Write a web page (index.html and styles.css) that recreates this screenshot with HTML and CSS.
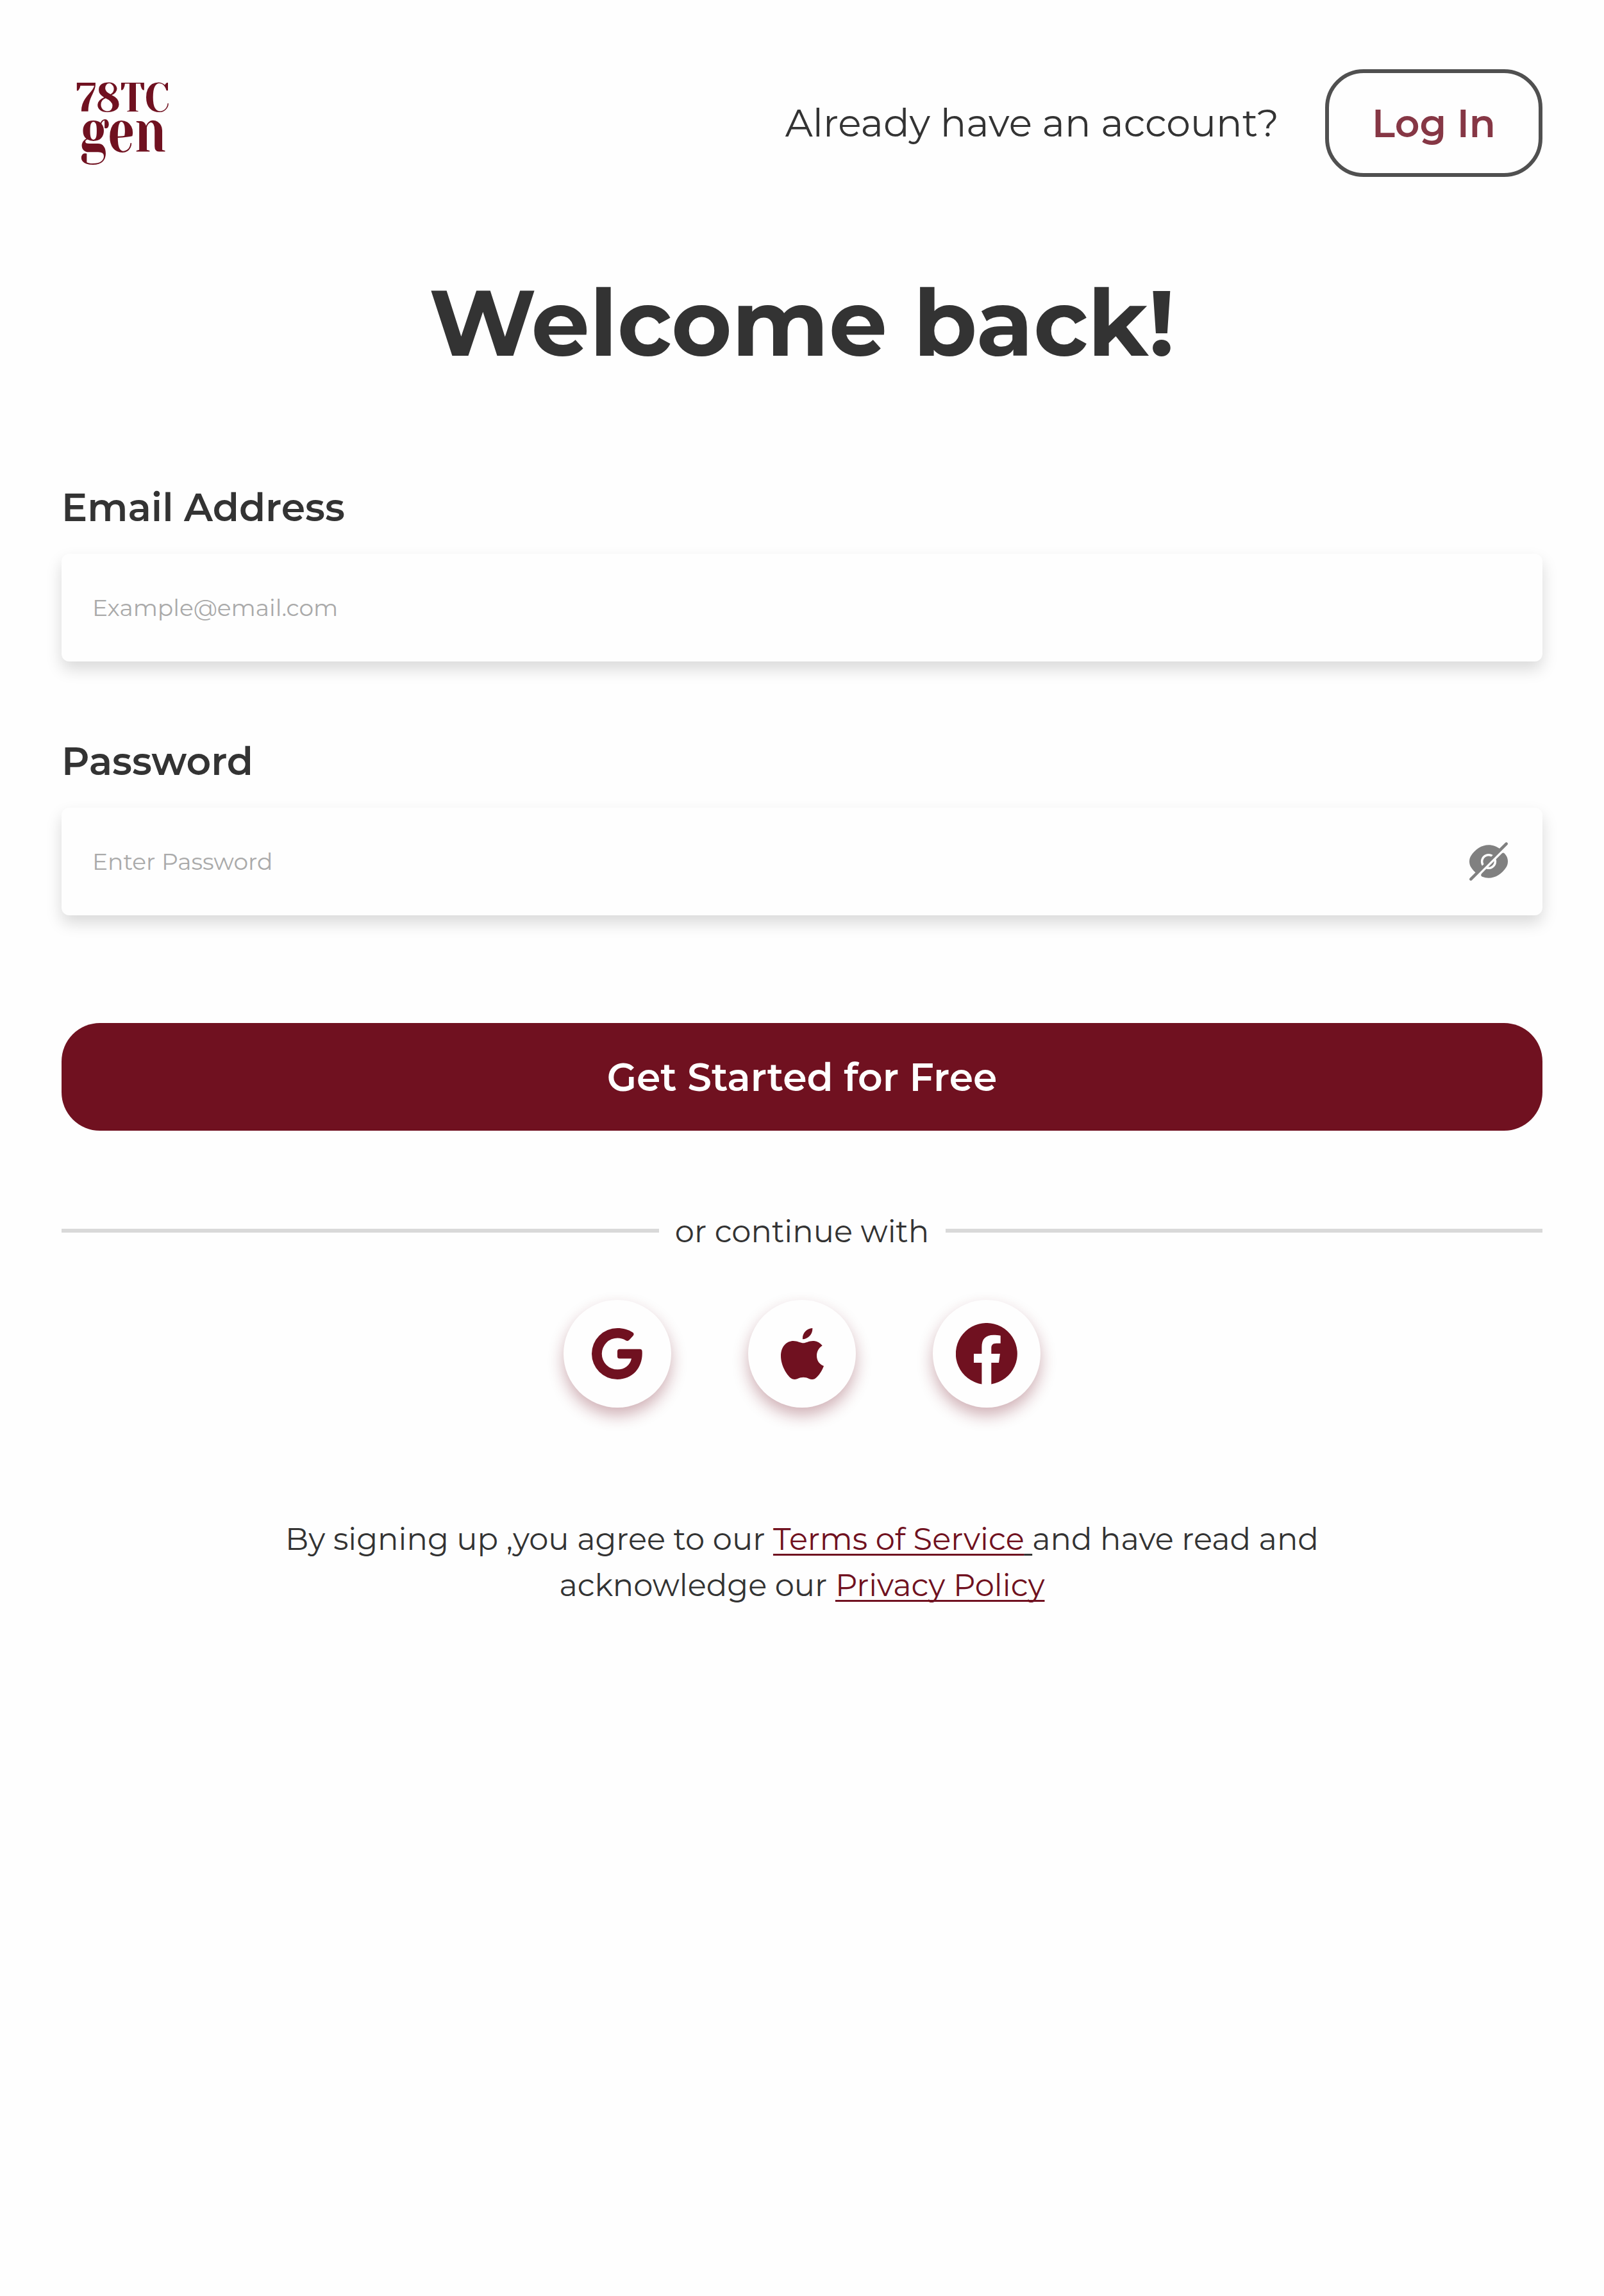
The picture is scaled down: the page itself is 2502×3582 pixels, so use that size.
FILE: index.html
```html
<!DOCTYPE html>
<html lang="en">
<head>
<meta charset="utf-8">
<title>78TC gen</title>
<link rel="stylesheet" href="styles.css">
</head>
<body>
<div class="page">
  <header class="header">
    <svg class="logo" viewBox="0 0 192 168" role="img" aria-label="78TC gen">
      <text x="22" y="66" font-size="64" textLength="147" lengthAdjust="spacingAndGlyphs">78TC</text>
      <text x="29" y="129" font-size="94" textLength="134" lengthAdjust="spacingAndGlyphs">gen</text>
    </svg>
    <div class="account">
      <span class="account-text">Already have an account?</span>
      <button class="login" type="button">Log In</button>
    </div>
  </header>

  <h1 class="title">Welcome back!</h1>

  <form class="form">
    <div class="field">
      <label class="label" for="email">Email Address</label>
      <div class="box">
        <input class="input" id="email" type="text" placeholder="Example@email.com">
      </div>
    </div>
    <div class="field">
      <label class="label" for="password">Password</label>
      <div class="box">
        <input class="input" id="password" type="text" placeholder="Enter Password">
        <svg class="eye" viewBox="0 0 24 24">
          <path d="M21.27 9.18C20.98 8.72 20.67 8.29 20.35 7.89C19.98 7.42 19.28 7.38 18.86 7.8L15.86 10.8C16.08 11.46 16.12 12.22 15.92 13.01C15.57 14.42 14.43 15.56 13.02 15.91C12.23 16.11 11.47 16.07 10.81 15.85C10.81 15.85 9.38 17.28 8.35 18.31C7.85 18.81 8.01 19.69 8.68 19.95C9.75 20.36 10.86 20.57 12 20.57C13.78 20.57 15.51 20.05 17.09 19.08C18.7 18.08 20.15 16.61 21.32 14.74C22.27 13.23 22.22 10.69 21.27 9.18Z"/>
          <path d="M14.02 9.98L9.98 14.02C9.47 13.5 9.14 12.78 9.14 12C9.14 10.43 10.42 9.14 12 9.14C12.78 9.14 13.5 9.47 14.02 9.98Z"/>
          <path d="M18.25 5.75L14.86 9.14C14.13 8.4 13.12 7.96 12 7.96C9.76 7.96 7.96 9.77 7.96 12C7.96 13.12 8.41 14.13 9.14 14.86L5.76 18.25H5.75C4.64 17.35 3.62 16.2 2.75 14.84C1.75 13.27 1.75 10.72 2.75 9.15C3.91 7.33 5.33 5.9 6.91 4.92C8.49 3.96 10.22 3.43 12 3.43C14.23 3.43 16.39 4.25 18.25 5.75Z"/>
          <path d="M14.86 12C14.86 13.57 13.58 14.86 12 14.86C11.94 14.86 11.89 14.86 11.83 14.84L14.84 11.83C14.86 11.89 14.86 11.94 14.86 12Z"/>
          <path d="M21.77 2.23C21.47 1.93 20.98 1.93 20.68 2.23L2.23 20.69C1.93 20.99 1.93 21.48 2.23 21.78C2.38 21.92 2.57 22 2.77 22C2.97 22 3.16 21.92 3.31 21.77L21.77 3.31C22.08 3.01 22.08 2.53 21.77 2.23Z"/>
        </svg>
      </div>
    </div>
    <button class="submit" type="button">Get Started for Free</button>
  </form>

  <div class="divider">
    <span class="rule"></span>
    <span class="divider-text">or continue with</span>
    <span class="rule"></span>
  </div>

  <div class="socials">
    <a class="social" aria-label="Google">
      <svg width="80" height="80" viewBox="0 0 80 80"><path d="M64 6.8C66 8.2 66 10.5 64.5 12L58.5 18.6C57 20.3 55 20.3 53.2 19.2C49.3 16.8 45 15.5 40.3 15.5A24.55 24.55 0 1 0 40.3 64.6C51 64.6 60 58 62 47.5H43.5Q40 47.5 40 44V36.2Q40 32.7 43.5 32.7H75.3Q78.2 32.7 78.6 35.6C80.5 60 65 80 40 80A40 40 0 0 1 0 40A40 40 0 0 1 40 0C49 0 57.5 2.3 64 6.8Z"/></svg>
    </a>
    <a class="social" aria-label="Apple">
      <svg width="67" height="80" viewBox="0 0 67 80"><path d="M35 23.3C31 23.3 26 20 19.5 20C9 20 0 28.5 0 43.5C0 58 9 73 16 78.3C18.5 80.3 22.5 80.4 26 79C32 76 38.5 76 44 79C48 80.6 51.5 80.3 54 78.3C59 74.3 64 67.5 67 59C60 56.5 56 50.5 56 43C56 36.5 59.3 30.8 64.7 27.3C61 22.8 55.5 20 50 20C43.5 20 39 23.3 35 23.3ZM34 17.3C33.2 8.5 40 .3 49.3 0C50 9 43 17 34 17.3Z"/></svg>
    </a>
    <a class="social" aria-label="Facebook">
      <svg width="96" height="96" viewBox="0 0 96 96"><path d="M40.4 95.4V62H28V48H40.4V37.5C40.4 25 46.5 18.7 58.8 18.7C62 18.7 66.5 19.1 69.7 19.7V31.7H63.3C57.5 31.7 55.3 34.5 55.3 39V48H68.9L67 62H55.3V95.4A48 48 0 1 0 40.4 95.4Z"/></svg>
    </a>
  </div>

  <p class="legal">By signing up ,you agree to our <span class="link-wrap"><a class="link">Terms of Service</a> </span>and have read and<br>acknowledge our <a class="link">Privacy Policy</a></p>
</div>
</body>
</html>
```
FILE: styles.css
```css
:root {
  --wine: #701120;
  --ink: #333333;
  --paper: #fefefe;
}

* {
  box-sizing: border-box;
}

body {
  margin: 0;
  background: var(--paper);
  color: var(--ink);
  font-family: "Montserrat", "Inter", "Liberation Sans", sans-serif;
}

button,
input {
  font-family: inherit;
}

.page {
  min-height: 3582px;
  padding: 108px 96px 0;
}

.header {
  display: flex;
  justify-content: space-between;
  height: 168px;
}

.logo {
  width: 192px;
  height: 168px;
  fill: var(--wine);
  font-family: "Yeseva One", "Playfair Display", "Liberation Serif", serif;
}

.account {
  display: flex;
  align-items: center;
  gap: 72px;
}

.account-text {
  font-size: 60px;
  line-height: 72px;
}

.login {
  width: 339px;
  height: 168px;
  padding: 0;
  border: 6px solid #505050;
  border-radius: 60px;
  background: transparent;
  color: #863745;
  font-size: 60px;
  font-weight: 600;
}

.title {
  margin: 139px 0 164px;
  font-size: 144px;
  font-weight: 700;
  line-height: 177px;
  text-align: center;
}

.form {
  display: flex;
  flex-direction: column;
  gap: 120px;
}

.field {
  display: flex;
  flex-direction: column;
  gap: 36px;
}

.label {
  font-size: 60px;
  font-weight: 600;
  line-height: 72px;
}

.box {
  display: flex;
  align-items: center;
  height: 168px;
  padding: 0 48px;
  border-radius: 12px;
  background: var(--paper);
  box-shadow: 0 12px 24px rgba(0, 0, 0, 0.15);
}

.input {
  flex: 1;
  height: 72px;
  padding: 0;
  border: 0;
  outline: 0;
  background: transparent;
  font-size: 36px;
}

.input::placeholder {
  color: #aaaaaa;
  opacity: 1;
}

.eye {
  width: 72px;
  height: 72px;
  fill: #808080;
}

.submit {
  height: 168px;
  margin-top: 48px;
  padding: 0;
  border: 0;
  border-radius: 60px;
  background: var(--wine);
  color: #fefefe;
  font-size: 60px;
  font-weight: 600;
}

.divider {
  display: flex;
  align-items: center;
  justify-content: space-between;
  height: 72px;
  margin-top: 120px;
}

.rule {
  width: 931.5px;
  height: 6px;
  background: #d9d9d9;
}

.divider-text {
  padding-top: 1px;
  font-size: 48px;
  line-height: 70px;
}

.socials {
  display: flex;
  justify-content: center;
  gap: 120px;
  margin-top: 72px;
}

.social {
  display: flex;
  align-items: center;
  justify-content: center;
  width: 168px;
  height: 168px;
  border-radius: 50%;
  background: var(--paper);
  box-shadow: 0 12px 24px rgba(112, 17, 32, 0.32);
  fill: var(--wine);
}

.legal {
  margin: 169px 0 0;
  font-size: 48px;
  line-height: 72px;
  text-align: center;
}

.link-wrap,
.link {
  text-decoration: underline;
  text-decoration-thickness: 2.5px;
  text-underline-offset: 6px;
  text-decoration-skip-ink: none;
}

.link {
  color: var(--wine);
}
```
